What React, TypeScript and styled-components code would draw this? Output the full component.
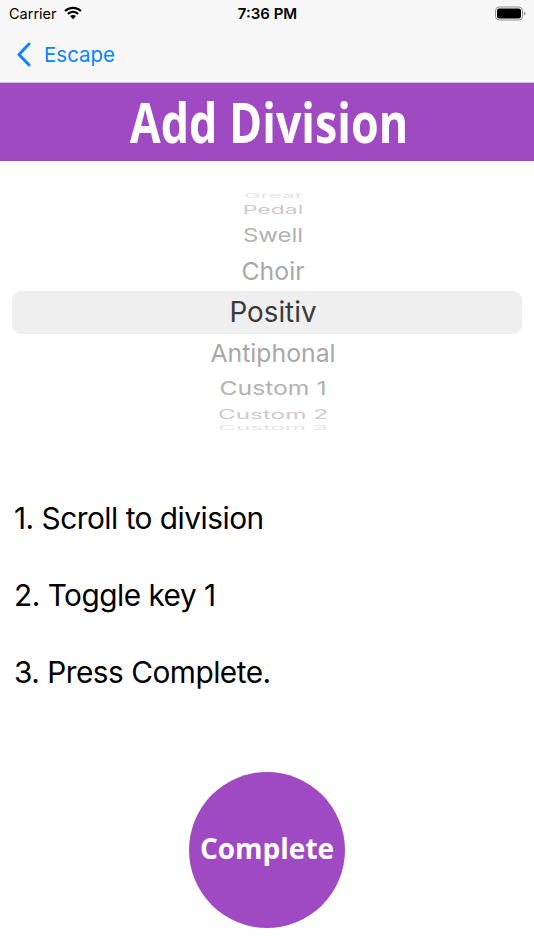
import React from "react";
import styled, { createGlobalStyle } from "styled-components";

const Global = createGlobalStyle`
  html, body { margin: 0; padding: 0; background: #fff; }
  #root { width: 534px; height: 950px; overflow: hidden; }
`;
const Page = styled.div`
  width: 534px; height: 950px; display: flex; flex-direction: column; background: #fff;
  font-family: Inter, "Liberation Sans", sans-serif; overflow: hidden;
`;
const TopBars = styled.header`
  height: 83px; box-sizing: border-box; background: #f7f7f7; border-bottom: 1px solid #c9c9c9;
  display: flex; flex-direction: column;
`;
const StatusBar = styled.div`
  height: 27px; display: grid; grid-template-columns: 1fr auto 1fr; align-items: center;
  padding: 0 8px 0 9px; color: #000; font-size: 14.5px;
`;
const Carrier = styled.div`display: flex; align-items: center; gap: 6px; font-weight: 400;`;
const Clock = styled.div`font-weight: 600; font-size: 15px;`;
const BatteryWrap = styled.div`justify-self: end; display: flex;`;
const NavBar = styled.nav`
  flex: 1; display: flex; align-items: center; gap: 13px; padding: 0 0 0 16px; color: #0a84ff;
  font-size: 20.5px;
`;
const TitleBand = styled.div`
  height: 78px; background: #9f4ac3; display: flex; align-items: center; justify-content: center;
`;
const Title = styled.h1`
  margin: 0; color: #fff; font-family: "Open Sans", sans-serif; font-weight: 700; font-size: 56px;
  line-height: 78px; white-space: nowrap; transform: translate(2px, -1px) scaleX(0.8);
`;
const Picker = styled.div`
  margin-top: 31px; padding: 0 12px; display: flex; flex-direction: column;
`;
const Row = styled.div<{ $h: number; $selected?: boolean }>`
  height: ${(p) => p.$h}px; box-sizing: border-box; display: flex; align-items: center; justify-content: center;
  padding-top: ${(p) => (p.$selected ? "1px" : "0")};
  background: ${(p) => (p.$selected ? "#efefef" : "transparent")};
  border-radius: ${(p) => (p.$selected ? "9px" : "0")};
`;
const RowText = styled.span<{ $size: number; $sy: number; $color: string }>`
  font-size: ${(p) => p.$size}px; color: ${(p) => p.$color}; line-height: 1;
  transform: translateX(6px) scaleY(${(p) => p.$sy}); white-space: nowrap;
`;
const Steps = styled.ol`
  list-style: none; margin: 48px 0 0; padding: 0 0 0 14px; display: flex; flex-direction: column;
`;
const Step = styled.li`
  height: 77px; line-height: 77px; font-size: 29.8px; color: #000; letter-spacing: -0.5px; white-space: nowrap;
`;
const CompleteWrap = styled.div`
  margin-top: 61px; display: flex; justify-content: center;
`;
const CompleteButton = styled.button`
  width: 156px; height: 156px; border: 0; border-radius: 50%; background: #9f4ac3; color: #fff; padding: 0 0 4px;
  font-family: "Open Sans", sans-serif; font-weight: 700; font-size: 28px;
`;

const items = [
  { t: "Great", h: 8, s: 22.5, y: 0.25, c: "#e2e2e2" },
  { t: "Pedal", h: 20, s: 23, y: 0.52, c: "#cbcbcb" },
  { t: "Swell", h: 32, s: 24, y: 0.79, c: "#b2b2b2" },
  { t: "Choir", h: 39, s: 24.8, y: 1, c: "#a8a8a8" },
  { t: "Positiv", h: 43, s: 27.8, y: 1, c: "#3a3a3a", sel: true },
  { t: "Antiphonal", h: 38, s: 24.8, y: 1, c: "#a8a8a8" },
  { t: "Custom 1", h: 32, s: 24.7, y: 0.77, c: "#b2b2b2" },
  { t: "Custom 2", h: 20, s: 24.3, y: 0.52, c: "#cbcbcb" },
  { t: "Custom 3", h: 8, s: 24, y: 0.25, c: "#e2e2e2" },
];

export default function App() {
  return (
    <Page>
      <Global />
      <TopBars>
        <StatusBar>
          <Carrier>
            Carrier
            <svg width="20" height="15" viewBox="0 0 20 15">
              <path d="M10 2.900c2.800 0 5.300 1.100 7.200 2.900l1.500-1.500C16.400 2 13.400.7 10 .7S3.600 2 1.300 4.300l1.500 1.500C4.700 4 7.200 2.900 10 2.900z" fill="#000" />
              <path d="M10 7c1.700 0 3.200.7 4.300 1.700l1.500-1.500C14.300 5.700 12.300 4.800 10 4.800s-4.300.9-5.800 2.400l1.500 1.500C6.800 7.700 8.300 7 10 7z" fill="#000" />
              <path d="M10 8.900c-1.100 0-2.200.4-3 1.200l3 3.200 3-3.200c-.8-.8-1.900-1.200-3-1.200z" fill="#000" />
            </svg>
          </Carrier>
          <Clock>7:36 PM</Clock>
          <BatteryWrap>
            <svg width="31" height="15" viewBox="0 0 31 15">
              <rect x="0.500" y="1" width="27" height="13" rx="3.600" fill="none" stroke="#8e8e8e" />
              <rect x="2" y="2.500" width="24" height="10" rx="2.300" fill="#000" />
              <path d="M29 5.500c.9.300 1.400 1.100 1.400 2s-.5 1.700-1.400 2z" fill="#8e8e8e" />
            </svg>
          </BatteryWrap>
        </StatusBar>
        <NavBar>
          <svg width="15" height="25" viewBox="0 0 15 25">
            <path d="M13 2 L3 12.500 L13 23" fill="none" stroke="#0a84ff" strokeWidth="3" strokeLinecap="round" strokeLinejoin="round" />
          </svg>
          Escape
        </NavBar>
      </TopBars>
      <TitleBand>
        <Title>Add Division</Title>
      </TitleBand>
      <Picker>
        {items.map((i) => (
          <Row key={i.t} $h={i.h} $selected={i.sel}>
            <RowText $size={i.s} $sy={i.y} $color={i.c}>{i.t}</RowText>
          </Row>
        ))}
      </Picker>
      <Steps>
        <Step>1. Scroll to division</Step>
        <Step>2. Toggle key 1</Step>
        <Step>3. Press Complete.</Step>
      </Steps>
      <CompleteWrap>
        <CompleteButton>Complete</CompleteButton>
      </CompleteWrap>
    </Page>
  );
}
